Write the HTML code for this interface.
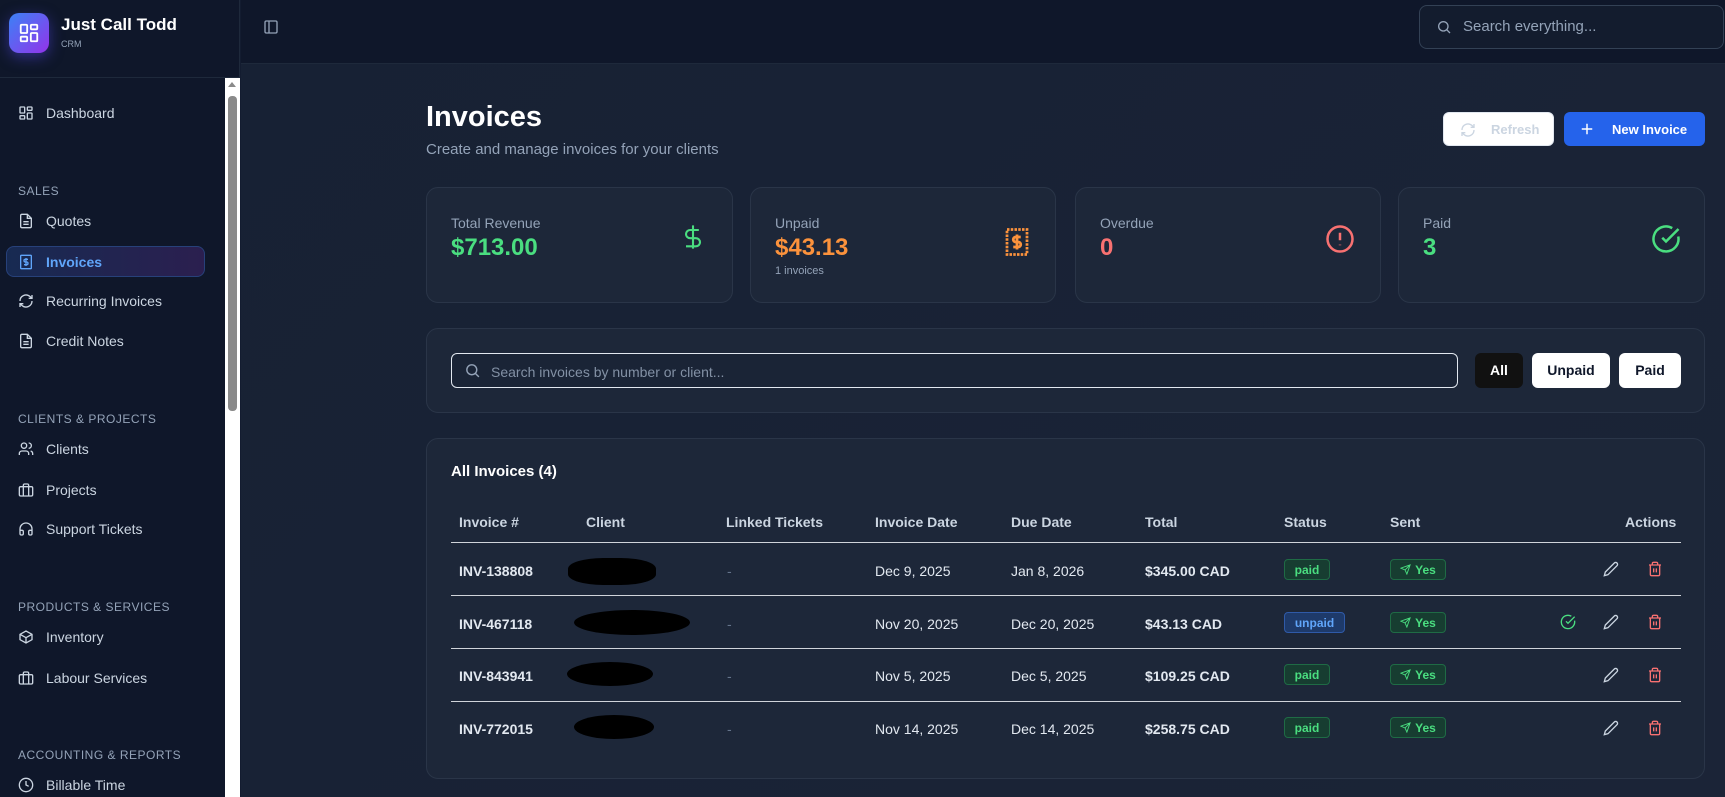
<!DOCTYPE html>
<html><head><meta charset="utf-8"><style>
*{box-sizing:border-box;margin:0;padding:0}
body{width:1725px;height:797px;overflow:hidden;background:#131c30;font-family:"Liberation Sans",sans-serif;color:#e2e8f0;position:relative}
.abs{position:absolute}
.sb{left:0;top:0;width:240px;height:797px;background:#0f172a;border-right:1px solid #1e293b}
.nav{position:absolute;left:18px;font-size:14px;color:#cbd5e1;display:flex;align-items:center;gap:12px}
.nav svg{width:16px;height:16px;stroke:#cbd5e1;fill:none;stroke-width:2}
.sec{position:absolute;left:18px;font-size:12px;letter-spacing:.5px;color:#94a3b8}
.main{left:241px;top:64px;width:1484px;height:733px;background:linear-gradient(135deg,#172134,#1b2437)}
.card{position:absolute;background:#1d2739;border:1px solid #2a3548;border-radius:12px}
.lbl{position:absolute;left:24px;top:27px;font-size:14px;color:#94a3b8}
.val{position:absolute;left:24px;top:46px;font-size:24px;font-weight:bold}
.hdr{position:absolute;top:514px;font-size:14px;font-weight:bold;color:#cbd5e1}
.cell{position:absolute;font-size:14px;color:#e2e8f0;font-weight:bold}
.line{position:absolute;left:451px;width:1230px;height:1px;background:#d0d4da}
.badge{position:absolute;height:21px;border-radius:4px;font-size:12px;font-weight:bold;display:flex;align-items:center;justify-content:center;gap:4px}
.paid{background:#173d31;border:1px solid #1f6b45;color:#4ade80;width:46px}
.unpaid{background:#1e3a6a;border:1px solid #2f5aa8;color:#60a5fa;width:61px}
.yes{background:#173d31;border:1px solid #1f6b45;color:#4ade80;width:56px}
.blob{position:absolute;background:#000;border-radius:50%}
</style></head><body>
<div class="abs sb"></div>
<div class="abs" style="left:9px;top:13px;width:40px;height:40px;border-radius:10px;background:linear-gradient(135deg,#3b82f6,#9333ea);box-shadow:0 4px 14px rgba(79,70,229,.5)"></div>
<svg class="abs" style="left:18px;top:22px" width="22" height="22" viewBox="0 0 24 24" fill="none" stroke="#fff" stroke-width="2"><rect x="3" y="3" width="7" height="9" rx="1"/><rect x="14" y="3" width="7" height="5" rx="1"/><rect x="14" y="12" width="7" height="9" rx="1"/><rect x="3" y="16" width="7" height="5" rx="1"/></svg>
<div class="abs" style="left:61px;top:15px;font-size:17px;font-weight:bold;color:#fff">Just Call Todd</div>
<div class="abs" style="left:61px;top:39px;font-size:9px;color:#94a3b8">CRM</div>
<div class="abs" style="left:0;top:77px;width:240px;height:1px;background:#1e293b"></div>
<div class="abs" style="left:225px;top:78px;width:15px;height:719px;background:#fff"></div>
<div class="abs" style="left:228px;top:96px;width:9px;height:315px;background:#8a8a8a;border-radius:4px"></div>
<div class="abs" style="left:228px;top:82px;width:0;height:0;border-left:4px solid transparent;border-right:4px solid transparent;border-bottom:5px solid #8a8a8a"></div>

<div class="nav" style="top:105px"><svg viewBox="0 0 24 24"><rect x="3" y="3" width="7" height="9" rx="1"/><rect x="14" y="3" width="7" height="5" rx="1"/><rect x="14" y="12" width="7" height="9" rx="1"/><rect x="3" y="16" width="7" height="5" rx="1"/></svg>Dashboard</div>
<div class="sec" style="top:184px">SALES</div>
<div class="nav" style="top:213px"><svg viewBox="0 0 24 24"><path d="M14 2H6a2 2 0 0 0-2 2v16a2 2 0 0 0 2 2h12a2 2 0 0 0 2-2V8z"/><path d="M14 2v6h6M16 13H8M16 17H8"/></svg>Quotes</div>
<div class="abs" style="left:6px;top:246px;width:199px;height:31px;border-radius:8px;border:1px solid #27417a;background:linear-gradient(90deg,#172a52,#2b1f4f)"></div>
<div class="nav" style="top:254px;color:#60a5fa;font-weight:bold"><svg viewBox="0 0 24 24" style="stroke:#60a5fa"><rect x="4" y="2" width="16" height="20" rx="1"/><path d="M15 8h-4a2 2 0 0 0 0 4h2a2 2 0 0 1 0 4H9M12 6v12"/></svg>Invoices</div>
<div class="nav" style="top:293px"><svg viewBox="0 0 24 24"><path d="M21 12a9 9 0 0 1-15 6.7L3 16M3 12a9 9 0 0 1 15-6.7L21 8M21 3v5h-5M3 21v-5h5"/></svg>Recurring Invoices</div>
<div class="nav" style="top:333px"><svg viewBox="0 0 24 24"><path d="M14 2H6a2 2 0 0 0-2 2v16a2 2 0 0 0 2 2h12a2 2 0 0 0 2-2V8z"/><path d="M14 2v6h6M16 13H8M16 17H8"/></svg>Credit Notes</div>
<div class="sec" style="top:412px">CLIENTS &amp; PROJECTS</div>
<div class="nav" style="top:441px"><svg viewBox="0 0 24 24"><circle cx="9" cy="7" r="4"/><path d="M2 21v-2a4 4 0 0 1 4-4h6a4 4 0 0 1 4 4v2M16 3a4 4 0 0 1 0 8M22 21v-2a4 4 0 0 0-3-3.9"/></svg>Clients</div>
<div class="nav" style="top:482px"><svg viewBox="0 0 24 24"><rect x="2" y="7" width="20" height="14" rx="2"/><path d="M16 21V5a2 2 0 0 0-2-2h-4a2 2 0 0 0-2 2v16"/></svg>Projects</div>
<div class="nav" style="top:521px"><svg viewBox="0 0 24 24"><path d="M3 14h3a2 2 0 0 1 2 2v3a2 2 0 0 1-2 2H5a2 2 0 0 1-2-2v-7a9 9 0 0 1 18 0v7a2 2 0 0 1-2 2h-1a2 2 0 0 1-2-2v-3a2 2 0 0 1 2-2h3"/></svg>Support Tickets</div>
<div class="sec" style="top:600px">PRODUCTS &amp; SERVICES</div>
<div class="nav" style="top:629px"><svg viewBox="0 0 24 24"><path d="M21 8l-9-5-9 5v8l9 5 9-5z"/><path d="M3 8l9 5 9-5M12 13v8"/></svg>Inventory</div>
<div class="nav" style="top:670px"><svg viewBox="0 0 24 24"><rect x="2" y="7" width="20" height="14" rx="2"/><path d="M16 21V5a2 2 0 0 0-2-2h-4a2 2 0 0 0-2 2v16"/></svg>Labour Services</div>
<div class="sec" style="top:748px">ACCOUNTING &amp; REPORTS</div>
<div class="nav" style="top:777px"><svg viewBox="0 0 24 24"><circle cx="12" cy="12" r="10"/><path d="M12 6v6l4 2"/></svg>Billable Time</div>

<!-- header -->
<div class="abs" style="left:241px;top:0;width:1484px;height:64px;background:#0f172a;border-bottom:1px solid #1e293b"></div>
<svg class="abs" style="left:263px;top:19px" width="16" height="16" viewBox="0 0 24 24" fill="none" stroke="#94a3b8" stroke-width="2"><rect x="3" y="3" width="18" height="18" rx="2"/><path d="M9 3v18"/></svg>
<div class="abs" style="left:1419px;top:5px;width:305px;height:44px;border:1px solid #334155;border-radius:8px;background:#131c2e"></div>
<svg class="abs" style="left:1436px;top:19px" width="16" height="16" viewBox="0 0 24 24" fill="none" stroke="#94a3b8" stroke-width="2"><circle cx="11" cy="11" r="7"/><path d="M21 21l-5-5"/></svg>
<div class="abs" style="left:1463px;top:18px;font-size:15px;color:#94a3b8">Search everything...</div>

<div class="abs main"></div>
<div class="abs" style="left:426px;top:101px;font-size:29px;font-weight:bold;color:#fff">Invoices</div>
<div class="abs" style="left:426px;top:141px;font-size:15px;color:#94a3b8">Create and manage invoices for your clients</div>
<div class="abs" style="left:1443px;top:112px;width:111px;height:34px;background:#fff;border-radius:6px;border:1px solid #e2e8f0"></div>
<svg class="abs" style="left:1460px;top:122px" width="16" height="16" viewBox="0 0 24 24" fill="none" stroke="#cbd5e1" stroke-width="2"><path d="M21 12a9 9 0 0 1-15 6.7L3 16M3 12a9 9 0 0 1 15-6.7L21 8M21 3v5h-5M3 21v-5h5"/></svg>
<div class="abs" style="left:1491px;top:122px;font-size:13px;font-weight:bold;color:#cbd5e1">Refresh</div>
<div class="abs" style="left:1564px;top:112px;width:141px;height:34px;background:#2563eb;border-radius:6px"></div>
<svg class="abs" style="left:1580px;top:122px" width="14" height="14" viewBox="0 0 24 24" fill="none" stroke="#fff" stroke-width="2.5"><path d="M12 3v18M3 12h18"/></svg>
<div class="abs" style="left:1612px;top:122px;font-size:13px;font-weight:bold;color:#fff">New Invoice</div>

<div class="card" style="left:426px;top:187px;width:307px;height:116px"><div class="lbl">Total Revenue</div><div class="val" style="color:#4ade80">$713.00</div>
<svg class="abs" style="left:252px;top:32px" width="28" height="34" viewBox="0 0 24 24" fill="none" stroke="#4ade80" stroke-width="1.8"><path d="M12 2v20M17 6H9.5a3.5 3.5 0 0 0 0 7h5a3.5 3.5 0 0 1 0 7H6"/></svg></div>
<div class="card" style="left:750px;top:187px;width:306px;height:116px"><div class="lbl">Unpaid</div><div class="val" style="color:#fb923c">$43.13</div><div class="abs" style="left:24px;top:77px;font-size:11px;color:#94a3b8">1 invoices</div>
<svg class="abs" style="left:251px;top:37px" width="30" height="34" viewBox="0 0 24 24" fill="none" stroke="#fb923c" stroke-width="2.2"><rect x="4" y="2" width="16" height="20" stroke-dasharray="2 1"/><path d="M15 8h-4a2 2 0 0 0 0 4h2a2 2 0 0 1 0 4H9M12 6v12"/></svg></div>
<div class="card" style="left:1075px;top:187px;width:306px;height:116px"><div class="lbl">Overdue</div><div class="val" style="color:#f87171">0</div>
<svg class="abs" style="left:249px;top:36px" width="30" height="30" viewBox="0 0 24 24" fill="none" stroke="#f87171" stroke-width="2"><circle cx="12" cy="12" r="10"/><path d="M12 7v6M12 16.5v.5"/></svg></div>
<div class="card" style="left:1398px;top:187px;width:307px;height:116px"><div class="lbl">Paid</div><div class="val" style="color:#4ade80">3</div>
<svg class="abs" style="left:252px;top:36px" width="30" height="30" viewBox="0 0 24 24" fill="none" stroke="#4ade80" stroke-width="2"><path d="M21.8 10A10 10 0 1 1 17 3.3"/><path d="M9 11l3 3L22 4"/></svg></div>

<div class="card" style="left:426px;top:328px;width:1279px;height:85px"></div>
<div class="abs" style="left:451px;top:353px;width:1007px;height:35px;border:1.5px solid #e2e8f0;border-radius:6px;background:#1a2436"></div>
<svg class="abs" style="left:464px;top:362px" width="17" height="17" viewBox="0 0 24 24" fill="none" stroke="#94a3b8" stroke-width="2"><circle cx="11" cy="11" r="7"/><path d="M21 21l-5-5"/></svg>
<div class="abs" style="left:491px;top:364px;font-size:14px;color:#8391a5">Search invoices by number or client...</div>
<div class="abs" style="left:1475px;top:353px;width:48px;height:35px;background:#111;border-radius:6px;color:#fff;font-size:14px;font-weight:bold;text-align:center;line-height:35px">All</div>
<div class="abs" style="left:1532px;top:353px;width:78px;height:35px;background:#fff;border-radius:6px;color:#0f172a;font-size:14px;font-weight:bold;text-align:center;line-height:35px">Unpaid</div>
<div class="abs" style="left:1619px;top:353px;width:62px;height:35px;background:#fff;border-radius:6px;color:#0f172a;font-size:14px;font-weight:bold;text-align:center;line-height:35px">Paid</div>

<div class="card" style="left:426px;top:438px;width:1279px;height:341px"></div>
<div class="abs" style="left:451px;top:463px;font-size:15px;font-weight:bold;color:#fff">All Invoices (4)</div>
<div class="hdr" style="left:459px">Invoice #</div><div class="hdr" style="left:586px">Client</div><div class="hdr" style="left:726px">Linked Tickets</div><div class="hdr" style="left:875px">Invoice Date</div><div class="hdr" style="left:1011px">Due Date</div><div class="hdr" style="left:1145px">Total</div><div class="hdr" style="left:1284px">Status</div><div class="hdr" style="left:1390px">Sent</div><div class="hdr" style="left:1625px">Actions</div>
<div class="line" style="top:542px"></div><div class="line" style="top:595px"></div><div class="line" style="top:648px"></div><div class="line" style="top:701px"></div>

<svg width="0" height="0" style="position:absolute"><defs>
<symbol id="pen" viewBox="0 0 24 24"><path d="M17 3a2.8 2.8 0 1 1 4 4L7.5 20.5 2 22l1.5-5.5z" fill="none" stroke="#cbd5e1" stroke-width="2"/></symbol>
<symbol id="trash" viewBox="0 0 24 24"><path d="M3 6h18M19 6v14a2 2 0 0 1-2 2H7a2 2 0 0 1-2-2V6M8 6V4a2 2 0 0 1 2-2h4a2 2 0 0 1 2 2v2M10 11v6M14 11v6" fill="none" stroke="#f87171" stroke-width="2"/></symbol>
<symbol id="send" viewBox="0 0 24 24"><path d="M22 2L11 13M22 2l-7 20-4-9-9-4z" fill="none" stroke="#4ade80" stroke-width="2"/></symbol>
</defs></svg>

<div class="cell" style="left:459px;top:563px">INV-138808</div><div class="blob" style="left:568px;top:558px;width:88px;height:27px;border-radius:40%"></div><div class="cell" style="left:727px;top:563px;color:#64748b;font-weight:normal">-</div><div class="cell" style="left:875px;top:563px;font-weight:normal">Dec 9, 2025</div><div class="cell" style="left:1011px;top:563px;font-weight:normal">Jan 8, 2026</div><div class="cell" style="left:1145px;top:563px">$345.00 CAD</div>
<div class="badge paid" style="left:1284px;top:559px">paid</div><div class="badge yes" style="left:1390px;top:559px"><svg width="11" height="11"><use href="#send"/></svg>Yes</div>
<div class="cell" style="left:459px;top:616px">INV-467118</div><div class="blob" style="left:574px;top:610px;width:116px;height:25px"></div><div class="cell" style="left:727px;top:616px;color:#64748b;font-weight:normal">-</div><div class="cell" style="left:875px;top:616px;font-weight:normal">Nov 20, 2025</div><div class="cell" style="left:1011px;top:616px;font-weight:normal">Dec 20, 2025</div><div class="cell" style="left:1145px;top:616px">$43.13 CAD</div>
<div class="badge unpaid" style="left:1284px;top:612px">unpaid</div><div class="badge yes" style="left:1390px;top:612px"><svg width="11" height="11"><use href="#send"/></svg>Yes</div>
<div class="cell" style="left:459px;top:668px">INV-843941</div><div class="blob" style="left:567px;top:662px;width:86px;height:24px"></div><div class="cell" style="left:727px;top:668px;color:#64748b;font-weight:normal">-</div><div class="cell" style="left:875px;top:668px;font-weight:normal">Nov 5, 2025</div><div class="cell" style="left:1011px;top:668px;font-weight:normal">Dec 5, 2025</div><div class="cell" style="left:1145px;top:668px">$109.25 CAD</div>
<div class="badge paid" style="left:1284px;top:664px">paid</div><div class="badge yes" style="left:1390px;top:664px"><svg width="11" height="11"><use href="#send"/></svg>Yes</div>
<div class="cell" style="left:459px;top:721px">INV-772015</div><div class="blob" style="left:574px;top:715px;width:80px;height:24px"></div><div class="cell" style="left:727px;top:721px;color:#64748b;font-weight:normal">-</div><div class="cell" style="left:875px;top:721px;font-weight:normal">Nov 14, 2025</div><div class="cell" style="left:1011px;top:721px;font-weight:normal">Dec 14, 2025</div><div class="cell" style="left:1145px;top:721px">$258.75 CAD</div>
<div class="badge paid" style="left:1284px;top:717px">paid</div><div class="badge yes" style="left:1390px;top:717px"><svg width="11" height="11"><use href="#send"/></svg>Yes</div>

<svg class="abs" style="left:1603px;top:561px" width="16" height="16"><use href="#pen"/></svg><svg class="abs" style="left:1647px;top:561px" width="16" height="16"><use href="#trash"/></svg>
<svg class="abs" style="left:1560px;top:614px" width="16" height="16" viewBox="0 0 24 24" fill="none" stroke="#4ade80" stroke-width="2"><path d="M21.8 10A10 10 0 1 1 17 3.3"/><path d="M9 11l3 3L22 4"/></svg>
<svg class="abs" style="left:1603px;top:614px" width="16" height="16"><use href="#pen"/></svg><svg class="abs" style="left:1647px;top:614px" width="16" height="16"><use href="#trash"/></svg>
<svg class="abs" style="left:1603px;top:667px" width="16" height="16"><use href="#pen"/></svg><svg class="abs" style="left:1647px;top:667px" width="16" height="16"><use href="#trash"/></svg>
<svg class="abs" style="left:1603px;top:720px" width="16" height="16"><use href="#pen"/></svg><svg class="abs" style="left:1647px;top:720px" width="16" height="16"><use href="#trash"/></svg>
</body></html>
